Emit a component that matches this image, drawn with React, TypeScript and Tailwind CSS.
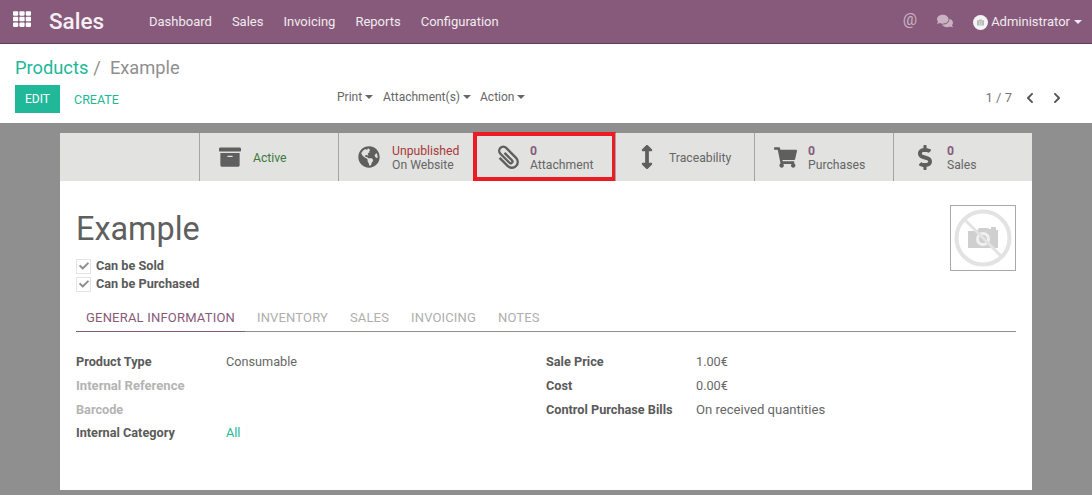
import React from "react";
import { FaArchive, FaGlobeAmericas, FaArrowsAltV, FaShoppingCart, FaDollarSign, FaTh, FaComments, FaChevronLeft, FaChevronRight, FaCheck, FaCamera } from "react-icons/fa";

const Caret = ({ className = "" }: { className?: string }) => (
  <span className={"inline-block w-0 h-0 border-x-[4px] border-x-transparent border-t-[4px] border-t-current " + className} />
);

function StatButton({ icon, top, bottom, topClass = "", hl = false, widthClass = "w-[139px]" }: any) {
  return (
    <div className={"relative h-[48px] flex items-center shrink-0 " + widthClass + " " + (hl ? "" : "border-l border-[#a5a5a5]")}>
      <div className="w-[53px] pl-[7px] flex justify-center text-[#5f5f5f] shrink-0">{icon}</div>
      <div className="mt-[1px] text-[12.2px] leading-[14px] text-[#666]">
        {top && <div className={topClass}>{top}</div>}
        {bottom && <div>{bottom}</div>}
      </div>
      {hl && <div className="absolute left-[-4px] right-[-1px] top-[-1px] bottom-0 border-[4px] border-[#ed1c24]" />}
    </div>
  );
}

const Field = ({ label, value, muted = false, valueClass = "text-[#666]", labelClass = "", className = "h-[24px]" }: any) => (
  <div className={"flex items-center " + className}>
    <div className={"w-[150px] font-bold " + labelClass + " " + (muted ? "text-[#b4b4b4]" : "text-[#5a5a5a]")}>{label}</div>
    <div className={valueClass}>{value}</div>
  </div>
);

export default function App() {
  return (
    <div className="w-[1092px] h-[495px] overflow-hidden bg-[#8f8f8f] text-[12.7px] text-[#666]" style={{ fontFamily: "Roboto, sans-serif" }}>
      <nav className="h-[44px] bg-[#875a7b] border-b border-[#5f3f57] flex items-center text-white">
        <FaTh className="ml-[13px] w-[18px] h-[18px] mb-[5px]" />
        <span className="ml-[18px] w-[100px] text-[22.5px] font-medium text-[#f4eff3]">Sales</span>
        <div className="flex gap-[20px] text-[13px] text-[#f1ebef]">
          <span>Dashboard</span><span>Sales</span><span>Invoicing</span><span>Reports</span><span>Configuration</span>
        </div>
        <div className="ml-auto flex items-center text-[13px] text-[#f1ebef]">
          <span className="text-[#c9b3c3] text-[16px] mb-[3px]">@</span>
          <FaComments className="ml-[20px] w-[16px] h-[16px] text-[#c9b3c3] mb-[1px]" />
          <span className="ml-[20px] w-[15px] h-[15px] rounded-full bg-[#f3f3f3] flex items-center justify-center mt-[1px]">
            <FaCamera className="w-[7px] h-[7px] text-[#b9b9b9]" />
          </span>
          <span className="ml-[3px]">Administrator</span>
          <Caret className="ml-[4px] mr-[10px] mt-[1px]" />
        </div>
      </nav>
      <header className="h-[79px] bg-white px-[15px] pt-[12px]">
        <div className="text-[18.3px] leading-[24px] text-[#8f8f8f]">
          <span className="text-[#21b799]">Products</span>
          <span className="ml-[5px]">/</span>
          <span className="ml-[9px]">Example</span>
        </div>
        <div className="flex mt-[5px]">
          <div className="w-[45px] h-[28px] bg-[#21b799] text-white text-[12px] flex items-center justify-center">EDIT</div>
          <div className="ml-[14px] text-[#21b799] text-[12.5px] leading-[30px] w-[263px]">CREATE</div>
          <div className="flex items-center h-[24px] text-[12px] text-[#666]">
            <span className="flex items-center gap-[3px]">Print<Caret /></span>
            <span className="ml-[10px] flex items-center gap-[3px]">Attachment(s)<Caret /></span>
            <span className="ml-[9px] flex items-center gap-[3px]">Action<Caret /></span>
          </div>
          <div className="ml-auto flex items-center h-[26px] text-[13px] text-[#777] pr-[15px]">
            <span>1 / 7</span>
            <FaChevronLeft className="ml-[13px] w-[10px] h-[12px] text-[#555]" />
            <FaChevronRight className="ml-[17px] w-[10px] h-[12px] text-[#555]" />
          </div>
        </div>
      </header>
      <main className="mx-[60px] mt-[10px] w-[972px] h-[357px] bg-white">
        <div className="h-[48px] bg-[#e2e2e0] flex pl-[139px]">
          <StatButton icon={<FaArchive className="w-[24px] h-[22px]" />} bottom={<span className="text-[#3c7a3c]">Active</span>} />
          <StatButton icon={<FaGlobeAmericas className="w-[22px] h-[22px]" />} top="Unpublished" topClass="text-[#a83a3a]" bottom="On Website" />
          <StatButton
            hl
            widthClass="w-[138px]"
            icon={
              <svg viewBox="0 0 24 24" fill="none" stroke="#5f5f5f" strokeWidth="2" className="w-[28px] h-[28px] -rotate-45 shrink-0">
                <path d="M7 8v10a5 5 0 0 0 10 0V6a3.5 3.5 0 0 0-7 0v11a1.5 1.5 0 0 0 3 0V8" />
              </svg>
            }
            top="0"
            topClass="font-bold text-[#875a7b]"
            bottom="Attachment"
          />
          <StatButton icon={<FaArrowsAltV className="w-[20px] h-[24px] ml-[1px]" />} bottom="Traceability" />
          <StatButton icon={<FaShoppingCart className="w-[23px] h-[21px]" />} top="0" topClass="font-bold text-[#875a7b]" bottom="Purchases" />
          <StatButton icon={<FaDollarSign className="w-[20px] h-[25px] ml-[1px]" />} top="0" topClass="font-bold text-[#875a7b]" bottom="Sales" />
        </div>
        <div className="relative px-[16px]">
          <div className="absolute left-[890px] top-[24px] w-[66px] h-[66px] border border-[#a9a9a9] bg-white flex items-center justify-center">
            <svg viewBox="0 0 58 58" className="w-[58px] h-[58px]">
              <path d="M14 22h9l2-3h9l1 1h2v-2h5v3h2v18H14z" fill="#cfcfcf" />
              <circle cx="29" cy="30" r="7" fill="#f1f1f1" />
              <circle cx="29" cy="30" r="4" fill="#cfcfcf" />
              <circle cx="29" cy="29" r="26.5" fill="none" stroke="#e3e3e3" strokeWidth="4" />
              <line x1="11" y1="11" x2="47" y2="47" stroke="#e3e3e3" strokeWidth="3" />
            </svg>
          </div>
          <h1 className="pt-[29px] text-[32.4px] leading-[38px] text-[#5f5f5f]">Example</h1>
          <div className="mt-[9px] font-bold text-[#5a5a5a]">
            {["Can be Sold", "Can be Purchased"].map((t) => (
              <div key={t} className="flex items-center h-[18px]">
                <span className="w-[15px] h-[15px] border border-[#e4e4e4] flex items-center justify-center">
                  <FaCheck className="w-[10px] h-[10px] text-[#8f8f8f]" />
                </span>
                <span className="ml-[5px]">{t}</span>
              </div>
            ))}
          </div>
          <div className="mt-[8px] h-[31px] border-b border-[#8f8f8f] flex text-[13px] uppercase text-[#aeaeae]">
            <div className="w-[169px] h-[31px] pl-[10px] leading-[33px] text-[#875a7b] border-b border-[#875a7b] tracking-[0.2px]">General Information</div>
            <div className="ml-[12px] flex gap-[22px] leading-[33px] tracking-[0.15px]">
              <span>Inventory</span><span>Sales</span><span>Invoicing</span><span>Notes</span>
            </div>
          </div>
          <div className="mt-[18px] flex">
            <div className="w-[470px]">
              <Field label="Product Type" value="Consumable" />
              <Field label="Internal Reference" muted labelClass="text-[13.1px]" />
              <Field label="Barcode" muted />
              <Field label="Internal Category" value="All" valueClass="text-[#21b799]" className="h-[24px] -mt-[1px]" />
            </div>
            <div>
              <Field label="Sale Price" value="1.00€" />
              <Field label="Cost" value="0.00€" />
              <Field label="Control Purchase Bills" value="On received quantities" valueClass="text-[#666] text-[13.1px]" />
            </div>
          </div>
        </div>
      </main>
    </div>
  );
}
